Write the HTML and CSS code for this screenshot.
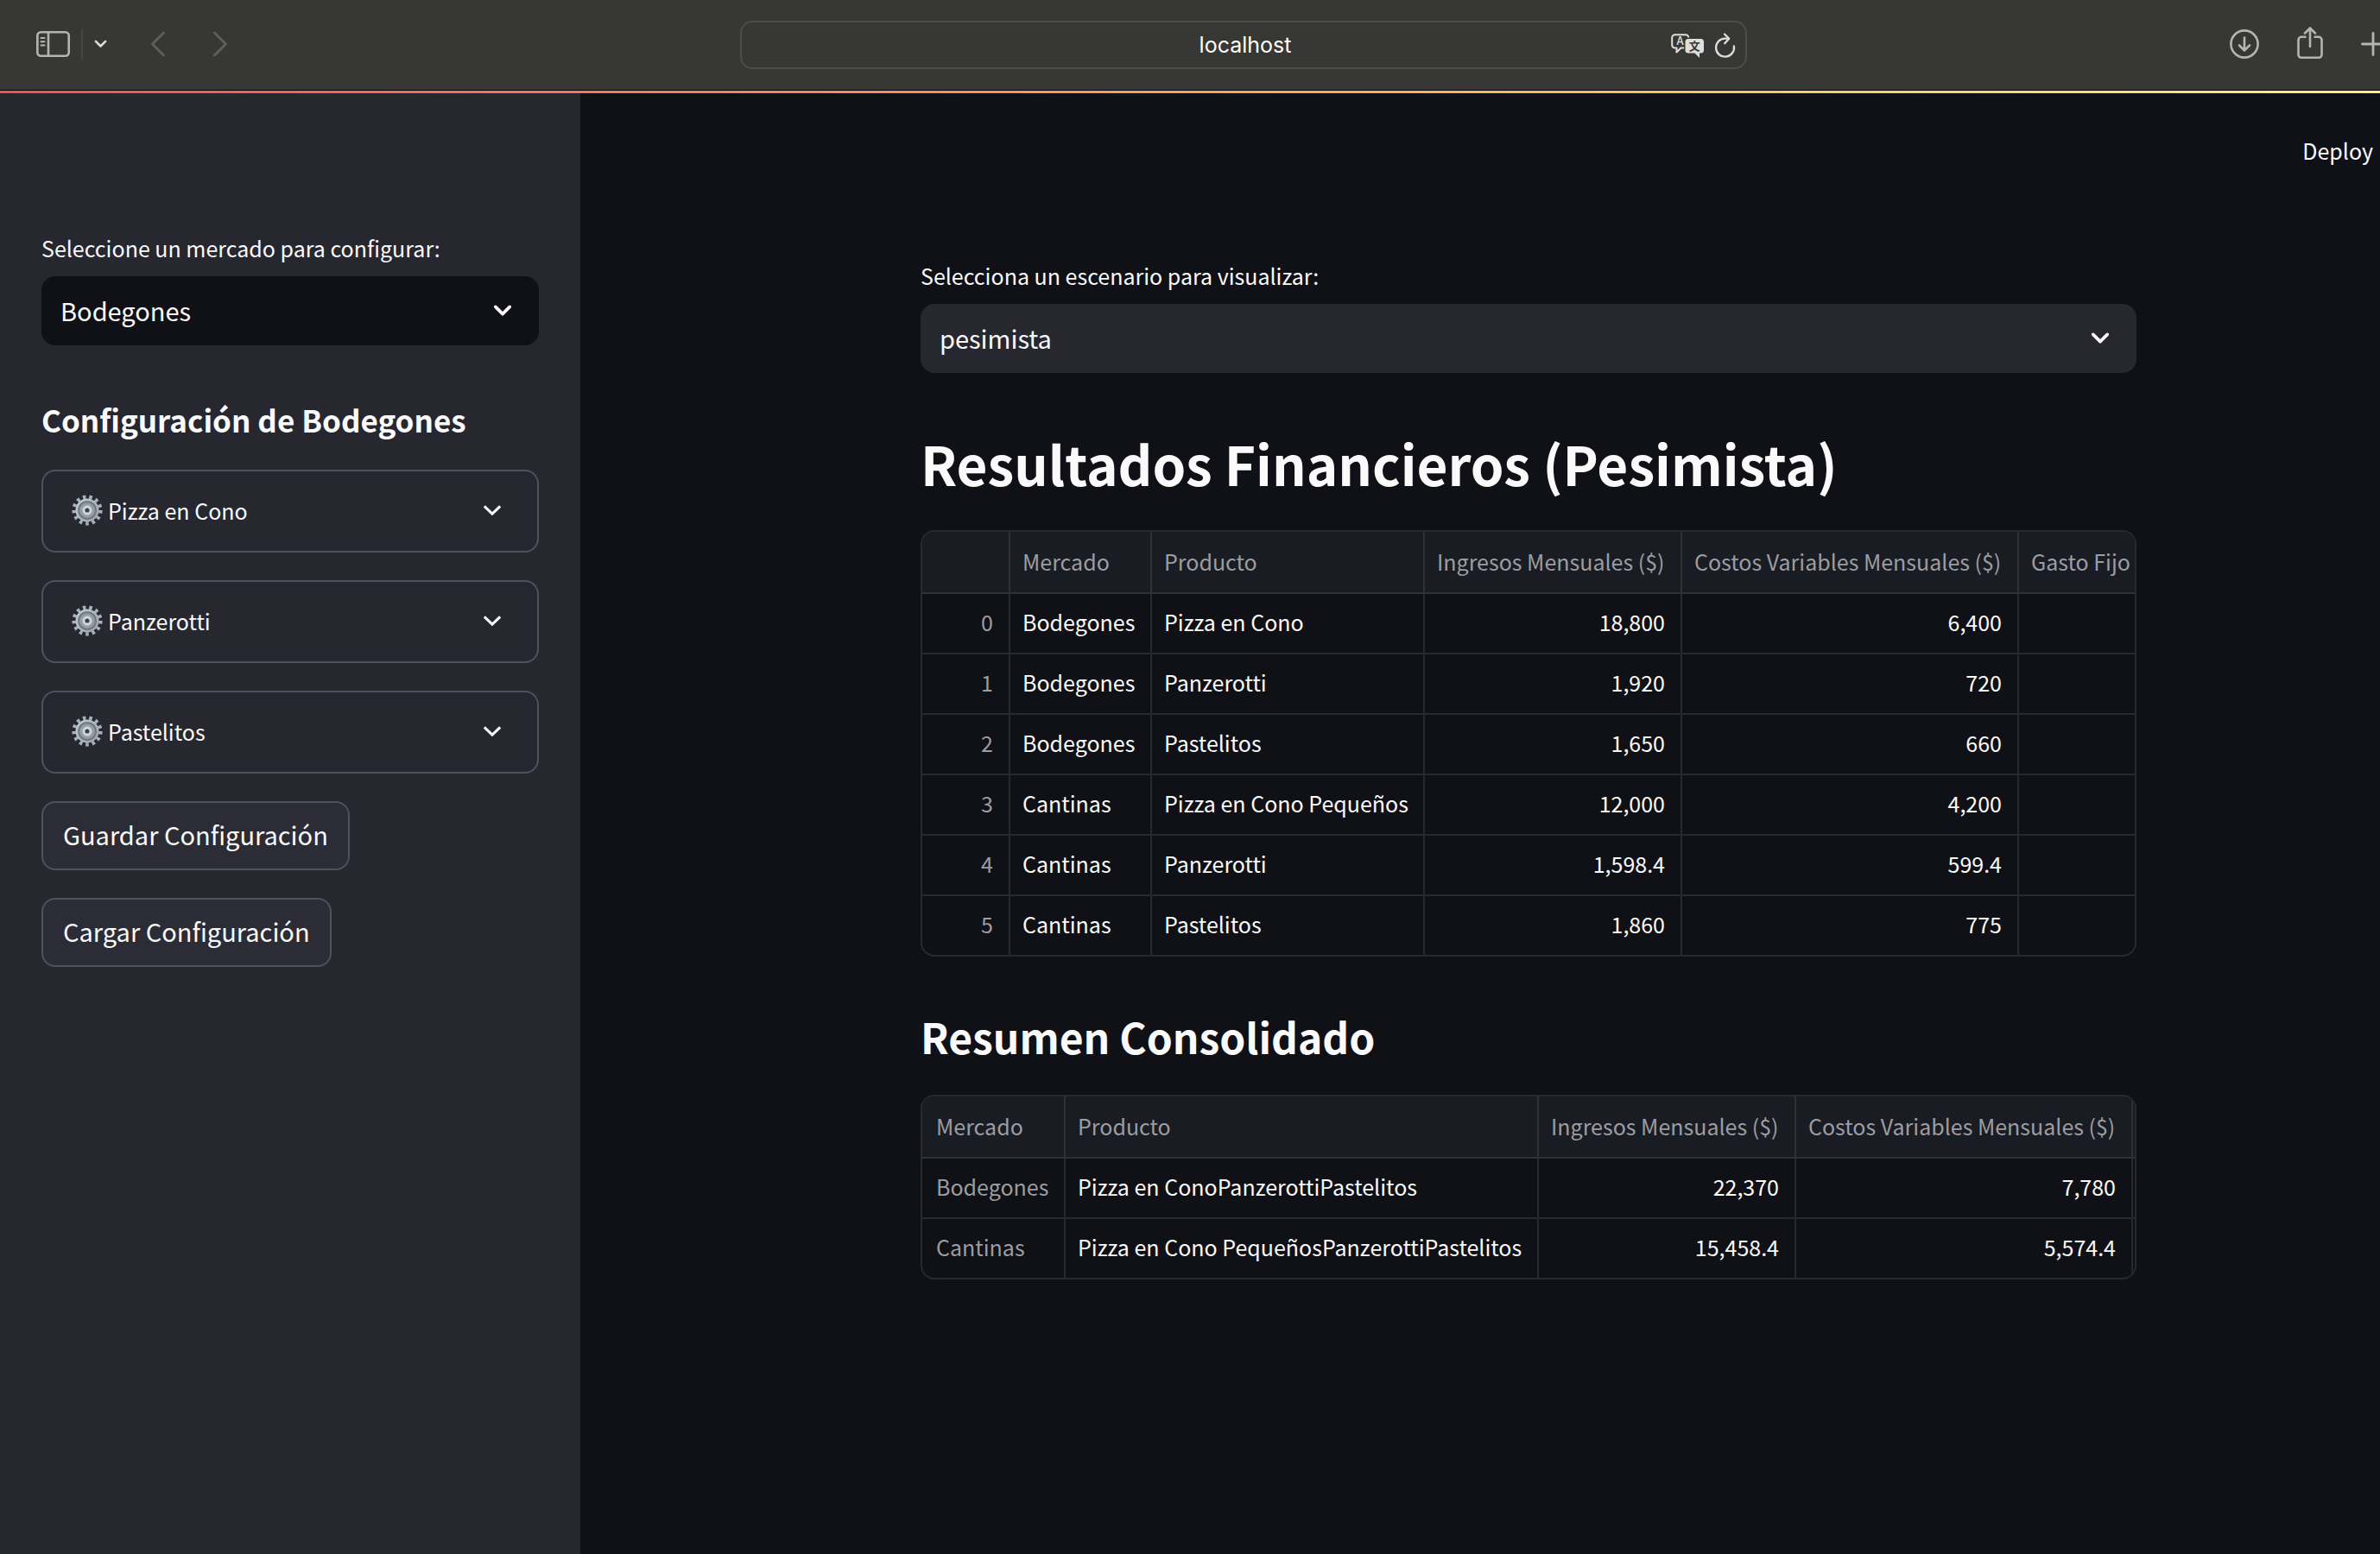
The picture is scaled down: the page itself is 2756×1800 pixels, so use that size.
FILE: index.html
```html
<!DOCTYPE html>
<html lang="es">
<head>
<meta charset="utf-8">
<title>localhost</title>
<link rel="stylesheet" href="styles.css">
</head>
<body>
<svg class="defs" aria-hidden="true">
  <defs>
    <linearGradient id="metal" x1="0" y1="0" x2="1" y2="1">
      <stop offset="0" stop-color="#c6cfd6"/>
      <stop offset="1" stop-color="#989fa8"/>
    </linearGradient>
    <symbol id="gear" viewBox="0 0 36 36">
      <circle cx="18" cy="18" r="15.400" fill="none" stroke="#a9b2ba" stroke-width="4.400" stroke-dasharray="3.500 3.943"/>
      <circle cx="18" cy="18" r="13.600" fill="url(#metal)"/>
      <circle cx="18" cy="18" r="10.200" fill="#8b939b" stroke="#626a72" stroke-width="1.200"/>
      <circle cx="18" cy="18" r="7.600" fill="#9aa2aa"/>
      <circle cx="18" cy="18" r="4" fill="#3e434b" stroke="#d0d7de" stroke-width="2.800"/>
    </symbol>
    <symbol id="chevron" viewBox="0 0 24 16">
      <path d="M3 3l9 9 9-9" fill="none" stroke="currentColor" stroke-width="4" stroke-linecap="round" stroke-linejoin="round"/>
    </symbol>
    <symbol id="chevron-sharp" viewBox="0 0 24 16">
      <path d="M2 3l10 9.500L22 3" fill="none" stroke="currentColor" stroke-width="3.400"/>
    </symbol>
  </defs>
</svg>
<div class="window">
  <header class="browser">
    <div class="tools tools-left">
      <button class="tool" aria-label="Barra lateral"><svg width="39" height="30" viewBox="0 0 39 30" fill="none" stroke="currentColor" stroke-width="2.600"><rect x="1.300" y="1.300" width="36.400" height="27.400" rx="4"/><path d="M14 1v28"/><path d="M5.500 8h4M5.500 12.300h4M5.500 16.600h4" stroke-width="2" stroke-linecap="round"/></svg></button>
      <span class="divider"></span>
      <button class="tool bright" aria-label="Grupos"><svg width="15" height="10"><use href="#chevron"/></svg></button>
      <button class="tool dim back" aria-label="Atrás"><svg width="16" height="30" viewBox="0 0 16 30" fill="none" stroke="currentColor" stroke-width="2.800" stroke-linecap="round" stroke-linejoin="round"><path d="M14.500 2L1.500 15l13 13"/></svg></button>
      <button class="tool dim forward" aria-label="Adelante"><svg width="16" height="30" viewBox="0 0 16 30" fill="none" stroke="currentColor" stroke-width="2.800" stroke-linecap="round" stroke-linejoin="round"><path d="M1.500 2l13 13-13 13"/></svg></button>
    </div>
    <div class="address">
      <input class="url" type="text" value="localhost" aria-label="Dirección">
      <div class="address-icons">
        <button class="tool bright" aria-label="Traducir"><svg width="40" height="32" viewBox="0 0 40 32">
          <path d="M15 19.500h-3.500l-5 5v-5H4.500a3.300 3.300 0 0 1-3.300-3.300V7.500a3.300 3.300 0 0 1 3.300-3.300h12.500a3.300 3.300 0 0 1 3.300 3.300" fill="none" stroke="currentColor" stroke-width="2" stroke-linejoin="round"/>
          <text class="glyph" x="10.500" y="16" fill="currentColor">A</text>
          <path d="M20 9h14.500a3.500 3.500 0 0 1 3.500 3.500v9.500a3.500 3.500 0 0 1-3.500 3.500H33V31l-5.500-5.500H20a3.500 3.500 0 0 1-3.500-3.500v-9.500A3.500 3.500 0 0 1 20 9z" fill="currentColor"/>
          <text class="glyph glyph-dark" x="27.300" y="22">文</text>
        </svg></button>
        <button class="tool bright" aria-label="Recargar"><svg width="26" height="32" viewBox="0 0 26 32" fill="none" stroke="currentColor" stroke-width="2.300" stroke-linecap="round" stroke-linejoin="round"><path d="M22.900 17.500A10.500 10.500 0 1 1 12.400 8.700H16.500"/><path d="M12 3.500l5.200 5.200-5 5.500"/></svg></button>
      </div>
    </div>
    <div class="tools tools-right">
      <button class="tool" aria-label="Descargas"><svg width="34" height="34" viewBox="0 0 34 34" fill="none" stroke="currentColor" stroke-width="2.600" stroke-linecap="round" stroke-linejoin="round"><circle cx="17" cy="17" r="15.600"/><path d="M17 9.500v15M11 18.500l6 6 6-6"/></svg></button>
      <button class="tool" aria-label="Compartir"><svg width="30" height="40" viewBox="0 0 30 40" fill="none" stroke="currentColor" stroke-width="2.600" stroke-linecap="round" stroke-linejoin="round"><path d="M9.500 11.800H5a3.500 3.500 0 0 0-3.500 3.500v17A3.500 3.500 0 0 0 5 35.800h20a3.500 3.500 0 0 0 3.500-3.500v-17a3.500 3.500 0 0 0-3.500-3.500h-4.500"/><path d="M15 23V1.500M9 7.500l6-6 6 6"/></svg></button>
      <button class="tool" aria-label="Nueva pestaña"><svg width="28" height="28" viewBox="0 0 28 28" fill="none" stroke="currentColor" stroke-width="2.800" stroke-linecap="round"><path d="M14 1.500v25M1.500 14h25"/></svg></button>
    </div>
  </header>
  <div class="progress"></div>
  <div class="app">
    <aside class="sidebar">
      <label class="label" for="mercado">Seleccione un mercado para configurar:</label>
      <div class="picker">
        <select class="select select-dark" id="mercado"><option>Bodegones</option></select>
        <svg class="picker-arrow" width="22" height="16"><use href="#chevron"/></svg>
      </div>
      <h3 class="side-title">Configuración de Bodegones</h3>
      <div class="stack">
        <button class="expander"><svg width="36" height="36"><use href="#gear"/></svg><span class="expander-text">Pizza en Cono</span><svg width="22" height="16"><use href="#chevron-sharp"/></svg></button>
        <button class="expander"><svg width="36" height="36"><use href="#gear"/></svg><span class="expander-text">Panzerotti</span><svg width="22" height="16"><use href="#chevron-sharp"/></svg></button>
        <button class="expander"><svg width="36" height="36"><use href="#gear"/></svg><span class="expander-text">Pastelitos</span><svg width="22" height="16"><use href="#chevron-sharp"/></svg></button>
        <button class="button">Guardar Configuración</button>
        <button class="button">Cargar Configuración</button>
      </div>
    </aside>
    <main class="main">
      <div class="topbar"><button class="deploy">Deploy</button></div>
      <div class="content">
        <label class="label" for="escenario">Selecciona un escenario para visualizar:</label>
        <div class="picker">
          <select class="select" id="escenario"><option>pesimista</option></select>
          <svg class="picker-arrow" width="22" height="16"><use href="#chevron"/></svg>
        </div>
        <h1 class="title">Resultados Financieros (Pesimista)</h1>
        <div class="frame">
          <table class="grid">
            <colgroup><col class="c-index"><col class="c-market"><col class="c-product"><col class="c-income"><col class="c-cost"><col></colgroup>
            <thead><tr><th></th><th>Mercado</th><th>Producto</th><th>Ingresos Mensuales ($)</th><th>Costos Variables Mensuales ($)</th><th>Gasto Fijo</th></tr></thead>
            <tbody>
              <tr><td class="num dimmed">0</td><td>Bodegones</td><td>Pizza en Cono</td><td class="num">18,800</td><td class="num">6,400</td><td></td></tr>
              <tr><td class="num dimmed">1</td><td>Bodegones</td><td>Panzerotti</td><td class="num">1,920</td><td class="num">720</td><td></td></tr>
              <tr><td class="num dimmed">2</td><td>Bodegones</td><td>Pastelitos</td><td class="num">1,650</td><td class="num">660</td><td></td></tr>
              <tr><td class="num dimmed">3</td><td>Cantinas</td><td>Pizza en Cono Pequeños</td><td class="num">12,000</td><td class="num">4,200</td><td></td></tr>
              <tr><td class="num dimmed">4</td><td>Cantinas</td><td>Panzerotti</td><td class="num">1,598.4</td><td class="num">599.4</td><td></td></tr>
              <tr><td class="num dimmed">5</td><td>Cantinas</td><td>Pastelitos</td><td class="num">1,860</td><td class="num">775</td><td></td></tr>
            </tbody>
          </table>
        </div>
        <h2 class="subtitle">Resumen Consolidado</h2>
        <div class="frame">
          <table class="grid">
            <colgroup><col class="c-group"><col class="c-joined"><col class="c-income"><col class="c-cost"><col></colgroup>
            <thead><tr><th>Mercado</th><th>Producto</th><th>Ingresos Mensuales ($)</th><th>Costos Variables Mensuales ($)</th><th class="cut"></th></tr></thead>
            <tbody>
              <tr><td class="dimmed">Bodegones</td><td>Pizza en ConoPanzerottiPastelitos</td><td class="num">22,370</td><td class="num">7,780</td><td class="cut"></td></tr>
              <tr><td class="dimmed">Cantinas</td><td>Pizza en Cono PequeñosPanzerottiPastelitos</td><td class="num">15,458.4</td><td class="num">5,574.4</td><td class="cut"></td></tr>
            </tbody>
          </table>
        </div>
      </div>
    </main>
  </div>
</div>
</body>
</html>
```
FILE: styles.css
```css
* { box-sizing: border-box; }

body {
  margin: 0;
  overflow: hidden;
  background: #101116;
  color: #fafafa;
  font-family: "Noto Sans CJK JP", "Noto Sans CJK SC", sans-serif;
  font-size: 25px;
}

button, select, input { font: inherit; color: inherit; }
.defs { position: absolute; width: 0; height: 0; }
svg { display: block; flex: none; }

/* The window runs past the right edge of the visible area. */
.window {
  width: calc(100% + 112px);
  min-height: 100vh;
  display: flex;
  flex-direction: column;
}

.browser {
  height: 105px;
  display: grid;
  grid-template-columns: 857px 1fr 845px;
  background: #373735;
  border-bottom: 1px solid #000;
}
.tools { display: flex; align-items: center; height: 102px; }
.tools-left { padding-left: 42px; }
.tools-right { justify-content: flex-end; gap: 44px; padding-right: 106px; }
.tool { border: 0; padding: 0; background: none; color: #b4b4b2; }
.bright { color: #dededc; }
.dim { color: #5f5f5d; }
.divider { width: 2px; height: 36px; margin: 0 13px; background: #454543; }
.back { margin-left: 51px; }
.forward { margin-left: 56px; }
.address {
  display: flex;
  align-items: center;
  height: 56px;
  margin-top: 24px;
  border: 2px solid #4c4c4a;
  border-radius: 14px;
  position: relative;
}
.url {
  width: 100%;
  border: 0;
  outline: 0;
  padding: 0 0 0 4px;
  background: none;
  text-align: center;
  font-family: Inter, sans-serif;
  font-size: 25px;
  color: #fff;
}
.address-icons { position: absolute; right: 10px; display: flex; gap: 10px; }
.glyph { font-size: 13px; font-weight: 500; text-anchor: middle; }
.glyph-dark { fill: #373735; font-weight: 700; }

.progress { height: 3px; background: linear-gradient(90deg, #eb5550, #fcf483); }

.app { flex: 1; display: flex; }

.sidebar {
  width: 672px;
  flex: none;
  padding: 160px 48px 48px;
  background: #272730;
}
.label { display: block; line-height: 38px; margin-bottom: 14px; }
.picker { position: relative; }
.select {
  display: block;
  width: 100%;
  height: 80px;
  padding: 0 22px 2px;
  border: 0;
  border-radius: 16px;
  appearance: none;
  background: #272730;
  font-size: 29px;
}
.select-dark { background: #101116; }
.picker-arrow { position: absolute; right: 31px; top: 32px; }

.side-title { margin: 62px 0 34px; font-size: 35px; line-height: 48px; font-weight: 700; }
.stack { display: flex; flex-direction: column; align-items: flex-start; gap: 32px; }
.expander {
  width: 100%;
  height: 96px;
  display: flex;
  align-items: center;
  gap: 6px;
  padding: 0 41px 2px 33px;
  border: 2px solid #50515a;
  border-radius: 16px;
  background: none;
  text-align: left;
}
.expander-text { flex: 1; }
.button {
  height: 80px;
  padding: 0 23px 4px;
  border: 2px solid #50515a;
  border-radius: 16px;
  background: #2b2c36;
  font-size: 29px;
}

.main { flex: 1; min-width: 0; }
.topbar { display: flex; justify-content: flex-end; padding: 46px 120px 0 0; }
.deploy { border: 0; padding: 0; background: none; line-height: 40px; }
.content { width: 1408px; max-width: 100%; margin: 106px auto 0; }

.title { margin: 60px 0 34px; font-size: 62px; line-height: 88px; font-weight: 700; }
.subtitle { margin: 60px 0 36px; font-size: 48px; line-height: 64px; font-weight: 700; }

.frame { border: 2px solid #292a2f; border-radius: 16px; overflow: hidden; }
.grid { width: 100%; table-layout: fixed; border-collapse: separate; border-spacing: 0; }
.grid th, .grid td {
  height: 70px;
  padding: 0 18px 4px 14px;
  border-right: 2px solid #292a2f;
  border-bottom: 2px solid #292a2f;
  text-align: left;
  white-space: nowrap;
  line-height: 40px;
}
.grid th { height: 72px; padding-bottom: 2px; background: #1a1c24; color: #9c9da1; font-weight: 400; border-color: #303137; }
.grid tr > :first-child { padding-left: 16px; }
.grid tr > :last-child { border-right: 0; padding-right: 0; }
.grid tbody tr:last-child td { height: 68px; border-bottom: 0; }
.grid .num { text-align: right; }
.grid .dimmed { color: #9c9da1; }
.grid .cut { padding: 0; }
.c-index { width: 102px; }
.c-market { width: 164px; }
.c-product { width: 316px; }
.c-income { width: 298px; }
.c-cost { width: 390px; }
.c-group { width: 166px; }
.c-joined { width: 548px; }
```
